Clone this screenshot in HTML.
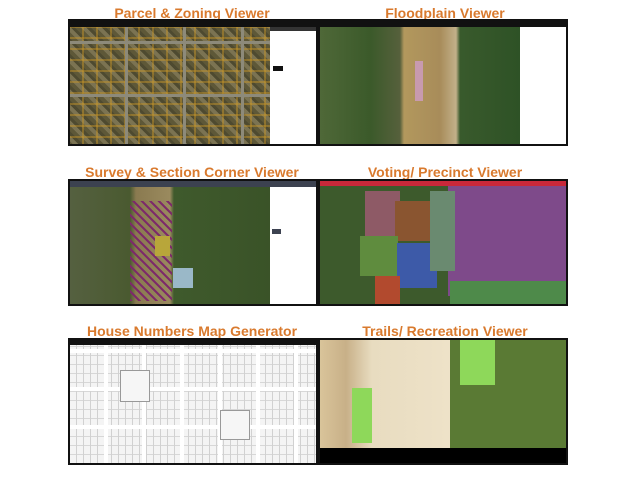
<!DOCTYPE html>
<html><head><style>
body{margin:0;width:640px;height:480px;background:#fff;position:relative;overflow:hidden;font-family:"Liberation Sans",Arial,sans-serif}
.t{position:absolute;width:260px;text-align:center;color:#d97a2e;font-weight:bold;font-size:14px;line-height:16px}
.p{position:absolute;border:2px solid #111;box-sizing:border-box;overflow:hidden}
.a{position:absolute}
</style></head><body>
<div class="t" style="left:62px;top:5px">Parcel &amp; Zoning Viewer</div>
<div class="t" style="left:315px;top:5px">Floodplain Viewer</div>
<div class="t" style="left:62px;top:164px">Survey &amp; Section Corner Viewer</div>
<div class="t" style="left:315px;top:164px">Voting/ Precinct Viewer</div>
<div class="t" style="left:62px;top:323px">House Numbers Map Generator</div>
<div class="t" style="left:315px;top:323px">Trails/ Recreation Viewer</div>

<!-- 1 -->
<div class="p" style="left:68px;top:19px;width:250px;height:127px;background:#6f6744">
<div class="a" style="left:0;top:0;right:0;height:6px;background:#111"></div>
<div class="a" style="left:0;top:6px;width:200px;height:120px;background:repeating-linear-gradient(90deg,transparent 0 55px,#8d8a7a 55px 58px),repeating-linear-gradient(0deg,transparent 0 50px,#8d8a7a 50px 53px),repeating-linear-gradient(90deg,transparent 0 12px,rgba(200,150,40,.45) 12px 14px),repeating-linear-gradient(0deg,transparent 0 9px,rgba(200,150,40,.45) 9px 11px),repeating-linear-gradient(45deg,#5e5838 0 4px,#7b7352 4px 8px,#4e4a30 8px 11px)"></div>
<div class="a" style="left:200px;top:6px;width:48px;height:119px;background:#fff"><div class="a" style="left:0;top:0;right:0;height:4px;background:#333"></div><div class="a" style="left:3px;top:39px;width:10px;height:5px;background:#111"></div></div>
</div>
<!-- 2 -->
<div class="p" style="left:318px;top:19px;width:250px;height:127px;background:#3e5a2c">
<div class="a" style="left:0;top:0;right:0;height:6px;background:#111"></div>
<div class="a" style="left:0;top:6px;width:200px;height:120px;background:linear-gradient(90deg,#4f6838 0,#3b5a2a 25%,#56603c 40%,#b2985d 42%,#a88c5a 60%,#c2b089 68%,#395a2c 70%,#2e5226 100%)"></div>
<div class="a" style="left:95px;top:40px;width:8px;height:40px;background:#c89aaf"></div>
<div class="a" style="left:200px;top:6px;width:48px;height:119px;background:#fff"></div>
</div>
<!-- 3 -->
<div class="p" style="left:68px;top:179px;width:250px;height:127px;background:#4d5a34">
<div class="a" style="left:0;top:0;right:0;height:6px;background:#3c4250"></div>
<div class="a" style="left:0;top:6px;width:200px;height:120px;background:linear-gradient(90deg,#556040 0,#4a5a30 30%,#8a7a50 33%,#9a8a5e 50%,#3f5a2c 52%,#3a5328 100%)"></div>
<div class="a" style="left:60px;top:20px;width:42px;height:100px;background:repeating-linear-gradient(45deg,#7d2a6a 0 2px,transparent 2px 6px)"></div>
<div class="a" style="left:85px;top:55px;width:15px;height:20px;background:#b8a63a"></div>
<div class="a" style="left:103px;top:87px;width:20px;height:20px;background:#9ab8c8"></div>
<div class="a" style="left:200px;top:6px;width:48px;height:119px;background:#fff"><div class="a" style="left:2px;top:42px;width:9px;height:5px;background:#3c4250"></div></div>
</div>
<!-- 4 -->
<div class="p" style="left:318px;top:179px;width:250px;height:127px;background:#3d5a2c">
<div class="a" style="left:0;top:0;right:0;height:5px;background:#c9283a"></div>
<div class="a" style="left:128px;top:5px;width:120px;height:110px;background:#7e4a8a"></div>
<div class="a" style="left:130px;top:100px;width:118px;height:25px;background:#4e8a4a"></div>
<div class="a" style="left:45px;top:10px;width:35px;height:45px;background:#8e5a66"></div>
<div class="a" style="left:75px;top:20px;width:40px;height:40px;background:#8a5530"></div>
<div class="a" style="left:40px;top:55px;width:38px;height:40px;background:#5f8c3e"></div>
<div class="a" style="left:77px;top:62px;width:40px;height:45px;background:#3d5aa8"></div>
<div class="a" style="left:55px;top:95px;width:25px;height:28px;background:#b24a2e"></div>
<div class="a" style="left:110px;top:10px;width:25px;height:80px;background:#6a8a70"></div>
</div>
<!-- 5 -->
<div class="p" style="left:68px;top:338px;width:250px;height:127px;background:#f4f4f4">
<div class="a" style="left:0;top:0;right:0;height:5px;background:#111"></div>
<div class="a" style="left:0;top:5px;right:0;bottom:0;background:repeating-linear-gradient(90deg,transparent 0 6px,#bbb 6px 7px),repeating-linear-gradient(0deg,transparent 0 8px,#c4c4c4 8px 9px);opacity:.6"></div>
<div class="a" style="left:0;top:5px;right:0;bottom:0;background:repeating-linear-gradient(90deg,transparent 0 34px,#fff 34px 38px),repeating-linear-gradient(0deg,transparent 0 34px,#fff 34px 38px)"></div>
<div class="a" style="left:50px;top:30px;width:28px;height:30px;background:#f6f6f6;border:1px solid #999"></div>
<div class="a" style="left:150px;top:70px;width:28px;height:28px;background:#f6f6f6;border:1px solid #999"></div>
</div>
<!-- 6 -->
<div class="p" style="left:318px;top:338px;width:250px;height:127px;background:#e6d6b4">
<div class="a" style="left:0;top:0;width:130px;height:108px;background:linear-gradient(90deg,#d9c49a 0,#c8b088 20%,#e8dcc0 40%,#eee2c8 100%)"></div>
<div class="a" style="left:32px;top:48px;width:20px;height:55px;background:#8ed85a"></div>
<div class="a" style="left:130px;top:0;width:118px;height:108px;background:#5a7a34"></div>
<div class="a" style="left:140px;top:0;width:35px;height:45px;background:#8ed85a"></div>
<div class="a" style="left:0;top:108px;width:248px;height:17px;background:#000"></div>
</div>
</body></html>
